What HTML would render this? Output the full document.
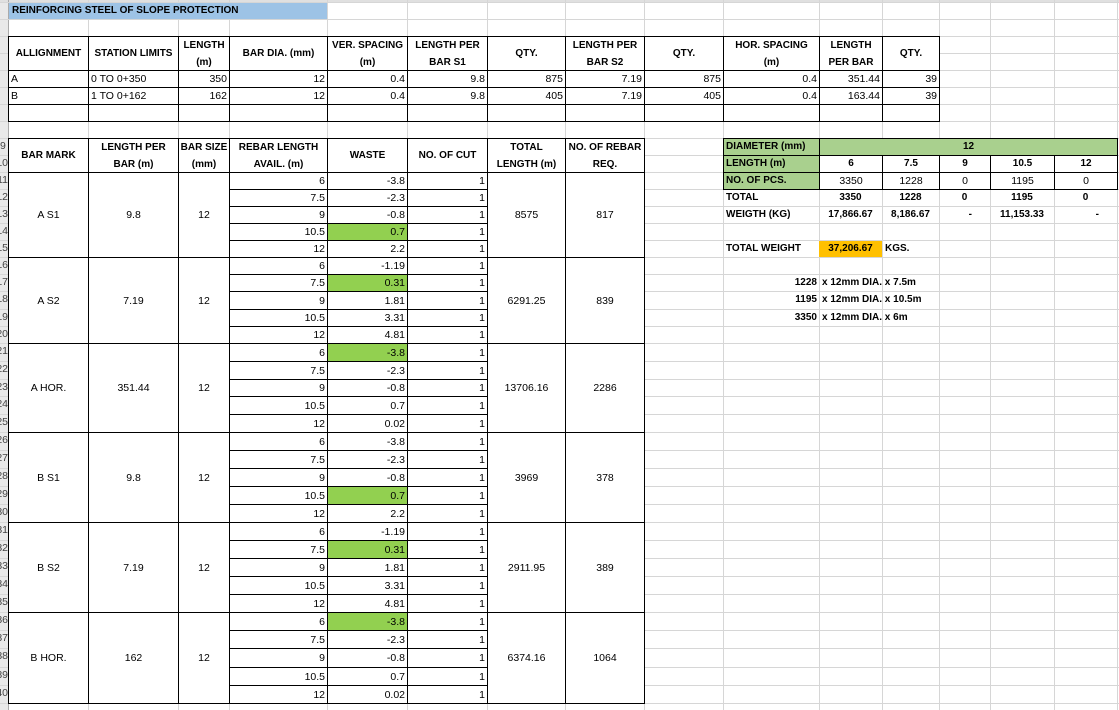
<!DOCTYPE html>
<html><head><meta charset="utf-8"><style>
body{margin:0;width:1119px;height:710px;overflow:hidden;background:#fff;position:relative;font-family:"Liberation Sans",Arial,sans-serif;font-size:10.5px;color:#000}
.c{position:absolute;box-sizing:border-box;display:flex;align-items:center;white-space:nowrap;overflow:hidden;line-height:12px;background:#fff}
.t{background:transparent}
.b{border:1px solid #000}
.r{justify-content:flex-end;padding-right:2px}
.m{justify-content:center;text-align:center}
.l{padding-left:2px}
.h{font-weight:bold;font-size:10px}
.g{background:#92d050}
.lg{background:#a9d08e}
.o{background:#ffc000}
.rh{position:absolute;left:0;width:8px;overflow:hidden;direction:rtl;text-align:left;font-size:10.5px;color:#444;line-height:17px}
</style></head><body>
<svg width="1119" height="710" style="position:absolute;left:0;top:0" stroke="#d6d6d6" stroke-width="1">
<rect x="0" y="0" width="8" height="710" fill="#e9e9e9" stroke="none"/>
<rect x="0" y="0" width="1119" height="2" fill="#e0e0e0" stroke="none"/>
<line x1="8.5" y1="0" x2="8.5" y2="710" stroke="#aaa"/>
<g>
<line x1="88.5" y1="0" x2="88.5" y2="710"/><line x1="178.5" y1="0" x2="178.5" y2="710"/><line x1="229.5" y1="0" x2="229.5" y2="710"/><line x1="327.5" y1="0" x2="327.5" y2="710"/><line x1="407.5" y1="0" x2="407.5" y2="710"/><line x1="487.5" y1="0" x2="487.5" y2="710"/><line x1="565.5" y1="0" x2="565.5" y2="710"/><line x1="644.5" y1="0" x2="644.5" y2="710"/><line x1="723.5" y1="0" x2="723.5" y2="710"/><line x1="819.5" y1="0" x2="819.5" y2="710"/><line x1="882.5" y1="0" x2="882.5" y2="710"/><line x1="939.5" y1="0" x2="939.5" y2="710"/><line x1="990.5" y1="0" x2="990.5" y2="710"/><line x1="1054.5" y1="0" x2="1054.5" y2="710"/><line x1="1117.5" y1="0" x2="1117.5" y2="710"/>
</g>
<g>
<line x1="0" y1="2.5" x2="1119" y2="2.5"/><line x1="0" y1="19.5" x2="1119" y2="19.5"/><line x1="0" y1="36.5" x2="1119" y2="36.5"/><line x1="0" y1="53.5" x2="1119" y2="53.5"/><line x1="0" y1="70.5" x2="1119" y2="70.5"/><line x1="0" y1="87.5" x2="1119" y2="87.5"/><line x1="0" y1="104.5" x2="1119" y2="104.5"/><line x1="0" y1="121.5" x2="1119" y2="121.5"/><line x1="0" y1="138.5" x2="1119" y2="138.5"/><line x1="0" y1="155.5" x2="1119" y2="155.5"/><line x1="0" y1="172.5" x2="1119" y2="172.5"/><line x1="0" y1="189.5" x2="1119" y2="189.5"/><line x1="0" y1="206.5" x2="1119" y2="206.5"/><line x1="0" y1="223.5" x2="1119" y2="223.5"/><line x1="0" y1="240.5" x2="1119" y2="240.5"/><line x1="0" y1="257.5" x2="1119" y2="257.5"/><line x1="0" y1="274.5" x2="1119" y2="274.5"/><line x1="0" y1="291.5" x2="1119" y2="291.5"/><line x1="0" y1="309.5" x2="1119" y2="309.5"/><line x1="0" y1="326.5" x2="1119" y2="326.5"/><line x1="0" y1="343.5" x2="1119" y2="343.5"/><line x1="0" y1="361.5" x2="1119" y2="361.5"/><line x1="0" y1="379.5" x2="1119" y2="379.5"/><line x1="0" y1="396.5" x2="1119" y2="396.5"/><line x1="0" y1="414.5" x2="1119" y2="414.5"/><line x1="0" y1="432.5" x2="1119" y2="432.5"/><line x1="0" y1="450.5" x2="1119" y2="450.5"/><line x1="0" y1="468.5" x2="1119" y2="468.5"/><line x1="0" y1="486.5" x2="1119" y2="486.5"/><line x1="0" y1="504.5" x2="1119" y2="504.5"/><line x1="0" y1="522.5" x2="1119" y2="522.5"/><line x1="0" y1="540.5" x2="1119" y2="540.5"/><line x1="0" y1="558.5" x2="1119" y2="558.5"/><line x1="0" y1="576.5" x2="1119" y2="576.5"/><line x1="0" y1="594.5" x2="1119" y2="594.5"/><line x1="0" y1="612.5" x2="1119" y2="612.5"/><line x1="0" y1="630.5" x2="1119" y2="630.5"/><line x1="0" y1="648.5" x2="1119" y2="648.5"/><line x1="0" y1="667.5" x2="1119" y2="667.5"/><line x1="0" y1="685.5" x2="1119" y2="685.5"/><line x1="0" y1="703.5" x2="1119" y2="703.5"/>
</g>
</svg>

<!-- row numbers (clipped) -->
<div class="rh" style="top:138px">9</div><div class="rh" style="top:155px">10</div><div class="rh" style="top:172px">11</div><div class="rh" style="top:189px">12</div><div class="rh" style="top:206px">13</div><div class="rh" style="top:223px">14</div><div class="rh" style="top:240px">15</div><div class="rh" style="top:257px">16</div><div class="rh" style="top:274px">17</div><div class="rh" style="top:291px">18</div><div class="rh" style="top:309px">19</div><div class="rh" style="top:326px">20</div><div class="rh" style="top:343px">21</div><div class="rh" style="top:361px">22</div><div class="rh" style="top:379px">23</div><div class="rh" style="top:396px">24</div><div class="rh" style="top:414px">25</div><div class="rh" style="top:432px">26</div><div class="rh" style="top:450px">27</div><div class="rh" style="top:468px">28</div><div class="rh" style="top:486px">29</div><div class="rh" style="top:504px">30</div><div class="rh" style="top:522px">31</div><div class="rh" style="top:540px">32</div><div class="rh" style="top:558px">33</div><div class="rh" style="top:576px">34</div><div class="rh" style="top:594px">35</div><div class="rh" style="top:612px">36</div><div class="rh" style="top:630px">37</div><div class="rh" style="top:648px">38</div><div class="rh" style="top:667px">39</div><div class="rh" style="top:685px">40</div>

<!-- title -->
<div class="c h l" style="left:9px;top:3px;width:318px;height:16px;background:#9dc3e6;padding-left:3px">REINFORCING STEEL OF SLOPE PROTECTION</div>

<!-- top table header -->
<div class="c b h m" style="left:8px;top:36px;width:81px;height:35px">ALLIGNMENT</div>
<div class="c b h m" style="left:88px;top:36px;width:91px;height:35px">STATION LIMITS</div>
<div class="c b h m" style="left:178px;top:36px;width:52px;height:35px;line-height:17px">LENGTH<br>(m)</div>
<div class="c b h m" style="left:229px;top:36px;width:99px;height:35px">BAR DIA. (mm)</div>
<div class="c b h m" style="left:327px;top:36px;width:81px;height:35px;line-height:17px">VER. SPACING<br>(m)</div>
<div class="c b h m" style="left:407px;top:36px;width:81px;height:35px;line-height:17px">LENGTH PER<br>BAR S1</div>
<div class="c b h m" style="left:487px;top:36px;width:79px;height:35px">QTY.</div>
<div class="c b h m" style="left:565px;top:36px;width:80px;height:35px;line-height:17px">LENGTH PER<br>BAR S2</div>
<div class="c b h m" style="left:644px;top:36px;width:80px;height:35px">QTY.</div>
<div class="c b h m" style="left:723px;top:36px;width:97px;height:35px;line-height:17px">HOR. SPACING<br>(m)</div>
<div class="c b h m" style="left:819px;top:36px;width:64px;height:35px;line-height:17px">LENGTH<br>PER BAR</div>
<div class="c b h m" style="left:882px;top:36px;width:58px;height:35px">QTY.</div>

<!-- row A -->
<div class="c b l" style="left:8px;top:70px;width:81px;height:18px">A</div>
<div class="c b l" style="left:88px;top:70px;width:91px;height:18px">0 TO 0+350</div>
<div class="c b r" style="left:178px;top:70px;width:52px;height:18px">350</div>
<div class="c b r" style="left:229px;top:70px;width:99px;height:18px">12</div>
<div class="c b r" style="left:327px;top:70px;width:81px;height:18px">0.4</div>
<div class="c b r" style="left:407px;top:70px;width:81px;height:18px">9.8</div>
<div class="c b r" style="left:487px;top:70px;width:79px;height:18px">875</div>
<div class="c b r" style="left:565px;top:70px;width:80px;height:18px">7.19</div>
<div class="c b r" style="left:644px;top:70px;width:80px;height:18px">875</div>
<div class="c b r" style="left:723px;top:70px;width:97px;height:18px">0.4</div>
<div class="c b r" style="left:819px;top:70px;width:64px;height:18px">351.44</div>
<div class="c b r" style="left:882px;top:70px;width:58px;height:18px">39</div>
<!-- row B -->
<div class="c b l" style="left:8px;top:87px;width:81px;height:18px">B</div>
<div class="c b l" style="left:88px;top:87px;width:91px;height:18px">1 TO 0+162</div>
<div class="c b r" style="left:178px;top:87px;width:52px;height:18px">162</div>
<div class="c b r" style="left:229px;top:87px;width:99px;height:18px">12</div>
<div class="c b r" style="left:327px;top:87px;width:81px;height:18px">0.4</div>
<div class="c b r" style="left:407px;top:87px;width:81px;height:18px">9.8</div>
<div class="c b r" style="left:487px;top:87px;width:79px;height:18px">405</div>
<div class="c b r" style="left:565px;top:87px;width:80px;height:18px">7.19</div>
<div class="c b r" style="left:644px;top:87px;width:80px;height:18px">405</div>
<div class="c b r" style="left:723px;top:87px;width:97px;height:18px">0.4</div>
<div class="c b r" style="left:819px;top:87px;width:64px;height:18px">163.44</div>
<div class="c b r" style="left:882px;top:87px;width:58px;height:18px">39</div>
<!-- blank row -->
<div class="c b" style="left:8px;top:104px;width:81px;height:18px"></div>
<div class="c b" style="left:88px;top:104px;width:91px;height:18px"></div>
<div class="c b" style="left:178px;top:104px;width:52px;height:18px"></div>
<div class="c b" style="left:229px;top:104px;width:99px;height:18px"></div>
<div class="c b" style="left:327px;top:104px;width:81px;height:18px"></div>
<div class="c b" style="left:407px;top:104px;width:81px;height:18px"></div>
<div class="c b" style="left:487px;top:104px;width:79px;height:18px"></div>
<div class="c b" style="left:565px;top:104px;width:80px;height:18px"></div>
<div class="c b" style="left:644px;top:104px;width:80px;height:18px"></div>
<div class="c b" style="left:723px;top:104px;width:97px;height:18px"></div>
<div class="c b" style="left:819px;top:104px;width:64px;height:18px"></div>
<div class="c b" style="left:882px;top:104px;width:58px;height:18px"></div>

<!-- lower table header -->
<div class="c b h m" style="left:8px;top:138px;width:81px;height:35px">BAR MARK</div>
<div class="c b h m" style="left:88px;top:138px;width:91px;height:35px;line-height:17px">LENGTH PER<br>BAR (m)</div>
<div class="c b h m" style="left:178px;top:138px;width:52px;height:35px;line-height:17px">BAR SIZE<br>(mm)</div>
<div class="c b h m" style="left:229px;top:138px;width:99px;height:35px;line-height:17px">REBAR LENGTH<br>AVAIL. (m)</div>
<div class="c b h m" style="left:327px;top:138px;width:81px;height:35px">WASTE</div>
<div class="c b h m" style="left:407px;top:138px;width:81px;height:35px">NO. OF CUT</div>
<div class="c b h m" style="left:487px;top:138px;width:79px;height:35px;line-height:17px">TOTAL<br>LENGTH (m)</div>
<div class="c b h m" style="left:565px;top:138px;width:80px;height:35px;line-height:17px">NO. OF REBAR<br>REQ.</div>

<!-- group A S1 -->
<div class="c b m" style="left:8px;top:172px;width:81px;height:86px">A S1</div>
<div class="c b m" style="left:88px;top:172px;width:91px;height:86px">9.8</div>
<div class="c b m" style="left:178px;top:172px;width:52px;height:86px">12</div>
<div class="c b m" style="left:487px;top:172px;width:79px;height:86px">8575</div>
<div class="c b m" style="left:565px;top:172px;width:80px;height:86px">817</div>
<div class="c b r" style="left:229px;top:172px;width:99px;height:18px">6</div><div class="c b r" style="left:327px;top:172px;width:81px;height:18px">-3.8</div><div class="c b r" style="left:407px;top:172px;width:81px;height:18px">1</div>
<div class="c b r" style="left:229px;top:189px;width:99px;height:18px">7.5</div><div class="c b r" style="left:327px;top:189px;width:81px;height:18px">-2.3</div><div class="c b r" style="left:407px;top:189px;width:81px;height:18px">1</div>
<div class="c b r" style="left:229px;top:206px;width:99px;height:18px">9</div><div class="c b r" style="left:327px;top:206px;width:81px;height:18px">-0.8</div><div class="c b r" style="left:407px;top:206px;width:81px;height:18px">1</div>
<div class="c b r" style="left:229px;top:223px;width:99px;height:18px">10.5</div><div class="c b r g" style="left:327px;top:223px;width:81px;height:18px">0.7</div><div class="c b r" style="left:407px;top:223px;width:81px;height:18px">1</div>
<div class="c b r" style="left:229px;top:240px;width:99px;height:18px">12</div><div class="c b r" style="left:327px;top:240px;width:81px;height:18px">2.2</div><div class="c b r" style="left:407px;top:240px;width:81px;height:18px">1</div>

<!-- group A S2 -->
<div class="c b m" style="left:8px;top:257px;width:81px;height:87px">A S2</div>
<div class="c b m" style="left:88px;top:257px;width:91px;height:87px">7.19</div>
<div class="c b m" style="left:178px;top:257px;width:52px;height:87px">12</div>
<div class="c b m" style="left:487px;top:257px;width:79px;height:87px">6291.25</div>
<div class="c b m" style="left:565px;top:257px;width:80px;height:87px">839</div>
<div class="c b r" style="left:229px;top:257px;width:99px;height:18px">6</div><div class="c b r" style="left:327px;top:257px;width:81px;height:18px">-1.19</div><div class="c b r" style="left:407px;top:257px;width:81px;height:18px">1</div>
<div class="c b r" style="left:229px;top:274px;width:99px;height:18px">7.5</div><div class="c b r g" style="left:327px;top:274px;width:81px;height:18px">0.31</div><div class="c b r" style="left:407px;top:274px;width:81px;height:18px">1</div>
<div class="c b r" style="left:229px;top:291px;width:99px;height:19px">9</div><div class="c b r" style="left:327px;top:291px;width:81px;height:19px">1.81</div><div class="c b r" style="left:407px;top:291px;width:81px;height:19px">1</div>
<div class="c b r" style="left:229px;top:309px;width:99px;height:18px">10.5</div><div class="c b r" style="left:327px;top:309px;width:81px;height:18px">3.31</div><div class="c b r" style="left:407px;top:309px;width:81px;height:18px">1</div>
<div class="c b r" style="left:229px;top:326px;width:99px;height:18px">12</div><div class="c b r" style="left:327px;top:326px;width:81px;height:18px">4.81</div><div class="c b r" style="left:407px;top:326px;width:81px;height:18px">1</div>

<!-- group A HOR -->
<div class="c b m" style="left:8px;top:343px;width:81px;height:90px">A HOR.</div>
<div class="c b m" style="left:88px;top:343px;width:91px;height:90px">351.44</div>
<div class="c b m" style="left:178px;top:343px;width:52px;height:90px">12</div>
<div class="c b m" style="left:487px;top:343px;width:79px;height:90px">13706.16</div>
<div class="c b m" style="left:565px;top:343px;width:80px;height:90px">2286</div>
<div class="c b r" style="left:229px;top:343px;width:99px;height:19px">6</div><div class="c b r g" style="left:327px;top:343px;width:81px;height:19px">-3.8</div><div class="c b r" style="left:407px;top:343px;width:81px;height:19px">1</div>
<div class="c b r" style="left:229px;top:361px;width:99px;height:19px">7.5</div><div class="c b r" style="left:327px;top:361px;width:81px;height:19px">-2.3</div><div class="c b r" style="left:407px;top:361px;width:81px;height:19px">1</div>
<div class="c b r" style="left:229px;top:379px;width:99px;height:18px">9</div><div class="c b r" style="left:327px;top:379px;width:81px;height:18px">-0.8</div><div class="c b r" style="left:407px;top:379px;width:81px;height:18px">1</div>
<div class="c b r" style="left:229px;top:396px;width:99px;height:19px">10.5</div><div class="c b r" style="left:327px;top:396px;width:81px;height:19px">0.7</div><div class="c b r" style="left:407px;top:396px;width:81px;height:19px">1</div>
<div class="c b r" style="left:229px;top:414px;width:99px;height:19px">12</div><div class="c b r" style="left:327px;top:414px;width:81px;height:19px">0.02</div><div class="c b r" style="left:407px;top:414px;width:81px;height:19px">1</div>

<!-- group B S1 -->
<div class="c b m" style="left:8px;top:432px;width:81px;height:91px">B S1</div>
<div class="c b m" style="left:88px;top:432px;width:91px;height:91px">9.8</div>
<div class="c b m" style="left:178px;top:432px;width:52px;height:91px">12</div>
<div class="c b m" style="left:487px;top:432px;width:79px;height:91px">3969</div>
<div class="c b m" style="left:565px;top:432px;width:80px;height:91px">378</div>
<div class="c b r" style="left:229px;top:432px;width:99px;height:19px">6</div><div class="c b r" style="left:327px;top:432px;width:81px;height:19px">-3.8</div><div class="c b r" style="left:407px;top:432px;width:81px;height:19px">1</div>
<div class="c b r" style="left:229px;top:450px;width:99px;height:19px">7.5</div><div class="c b r" style="left:327px;top:450px;width:81px;height:19px">-2.3</div><div class="c b r" style="left:407px;top:450px;width:81px;height:19px">1</div>
<div class="c b r" style="left:229px;top:468px;width:99px;height:19px">9</div><div class="c b r" style="left:327px;top:468px;width:81px;height:19px">-0.8</div><div class="c b r" style="left:407px;top:468px;width:81px;height:19px">1</div>
<div class="c b r" style="left:229px;top:486px;width:99px;height:19px">10.5</div><div class="c b r g" style="left:327px;top:486px;width:81px;height:19px">0.7</div><div class="c b r" style="left:407px;top:486px;width:81px;height:19px">1</div>
<div class="c b r" style="left:229px;top:504px;width:99px;height:19px">12</div><div class="c b r" style="left:327px;top:504px;width:81px;height:19px">2.2</div><div class="c b r" style="left:407px;top:504px;width:81px;height:19px">1</div>

<!-- group B S2 -->
<div class="c b m" style="left:8px;top:522px;width:81px;height:91px">B S2</div>
<div class="c b m" style="left:88px;top:522px;width:91px;height:91px">7.19</div>
<div class="c b m" style="left:178px;top:522px;width:52px;height:91px">12</div>
<div class="c b m" style="left:487px;top:522px;width:79px;height:91px">2911.95</div>
<div class="c b m" style="left:565px;top:522px;width:80px;height:91px">389</div>
<div class="c b r" style="left:229px;top:522px;width:99px;height:19px">6</div><div class="c b r" style="left:327px;top:522px;width:81px;height:19px">-1.19</div><div class="c b r" style="left:407px;top:522px;width:81px;height:19px">1</div>
<div class="c b r" style="left:229px;top:540px;width:99px;height:19px">7.5</div><div class="c b r g" style="left:327px;top:540px;width:81px;height:19px">0.31</div><div class="c b r" style="left:407px;top:540px;width:81px;height:19px">1</div>
<div class="c b r" style="left:229px;top:558px;width:99px;height:19px">9</div><div class="c b r" style="left:327px;top:558px;width:81px;height:19px">1.81</div><div class="c b r" style="left:407px;top:558px;width:81px;height:19px">1</div>
<div class="c b r" style="left:229px;top:576px;width:99px;height:19px">10.5</div><div class="c b r" style="left:327px;top:576px;width:81px;height:19px">3.31</div><div class="c b r" style="left:407px;top:576px;width:81px;height:19px">1</div>
<div class="c b r" style="left:229px;top:594px;width:99px;height:19px">12</div><div class="c b r" style="left:327px;top:594px;width:81px;height:19px">4.81</div><div class="c b r" style="left:407px;top:594px;width:81px;height:19px">1</div>

<!-- group B HOR -->
<div class="c b m" style="left:8px;top:612px;width:81px;height:92px">B HOR.</div>
<div class="c b m" style="left:88px;top:612px;width:91px;height:92px">162</div>
<div class="c b m" style="left:178px;top:612px;width:52px;height:92px">12</div>
<div class="c b m" style="left:487px;top:612px;width:79px;height:92px">6374.16</div>
<div class="c b m" style="left:565px;top:612px;width:80px;height:92px">1064</div>
<div class="c b r" style="left:229px;top:612px;width:99px;height:19px">6</div><div class="c b r g" style="left:327px;top:612px;width:81px;height:19px">-3.8</div><div class="c b r" style="left:407px;top:612px;width:81px;height:19px">1</div>
<div class="c b r" style="left:229px;top:630px;width:99px;height:19px">7.5</div><div class="c b r" style="left:327px;top:630px;width:81px;height:19px">-2.3</div><div class="c b r" style="left:407px;top:630px;width:81px;height:19px">1</div>
<div class="c b r" style="left:229px;top:648px;width:99px;height:20px">9</div><div class="c b r" style="left:327px;top:648px;width:81px;height:20px">-0.8</div><div class="c b r" style="left:407px;top:648px;width:81px;height:20px">1</div>
<div class="c b r" style="left:229px;top:667px;width:99px;height:19px">10.5</div><div class="c b r" style="left:327px;top:667px;width:81px;height:19px">0.7</div><div class="c b r" style="left:407px;top:667px;width:81px;height:19px">1</div>
<div class="c b r" style="left:229px;top:685px;width:99px;height:19px">12</div><div class="c b r" style="left:327px;top:685px;width:81px;height:19px">0.02</div><div class="c b r" style="left:407px;top:685px;width:81px;height:19px">1</div>

<!-- right summary table -->
<div class="c b h l lg" style="left:723px;top:138px;width:97px;height:18px">DIAMETER (mm)</div>
<div class="c b h m lg" style="left:819px;top:138px;width:299px;height:18px">12</div>
<div class="c b h l lg" style="left:723px;top:155px;width:97px;height:18px">LENGTH (m)</div>
<div class="c b h m" style="left:819px;top:155px;width:64px;height:18px">6</div>
<div class="c b h m" style="left:882px;top:155px;width:58px;height:18px">7.5</div>
<div class="c b h m" style="left:939px;top:155px;width:52px;height:18px">9</div>
<div class="c b h m" style="left:990px;top:155px;width:65px;height:18px">10.5</div>
<div class="c b h m" style="left:1054px;top:155px;width:64px;height:18px">12</div>
<div class="c b h l lg" style="left:723px;top:172px;width:97px;height:18px">NO. OF PCS.</div>
<div class="c b m" style="left:819px;top:172px;width:64px;height:18px">3350</div>
<div class="c b m" style="left:882px;top:172px;width:58px;height:18px">1228</div>
<div class="c b m" style="left:939px;top:172px;width:52px;height:18px">0</div>
<div class="c b m" style="left:990px;top:172px;width:65px;height:18px">1195</div>
<div class="c b m" style="left:1054px;top:172px;width:64px;height:18px">0</div>

<div class="c t h l" style="left:724px;top:189px;width:95px;height:17px">TOTAL</div>
<div class="c t h m" style="left:819px;top:189px;width:63px;height:17px">3350</div>
<div class="c t h m" style="left:882px;top:189px;width:57px;height:17px">1228</div>
<div class="c t h m" style="left:939px;top:189px;width:51px;height:17px">0</div>
<div class="c t h m" style="left:990px;top:189px;width:64px;height:17px">1195</div>
<div class="c t h m" style="left:1054px;top:189px;width:63px;height:17px">0</div>

<div class="c t h l" style="left:724px;top:206px;width:95px;height:17px">WEIGTH (KG)</div>
<div class="c t h m" style="left:819px;top:206px;width:63px;height:17px">17,866.67</div>
<div class="c t h m" style="left:882px;top:206px;width:57px;height:17px">8,186.67</div>
<div class="c t h r" style="left:939px;top:206px;width:51px;height:17px;padding-right:18px">-</div>
<div class="c t h m" style="left:990px;top:206px;width:64px;height:17px">11,153.33</div>
<div class="c t h r" style="left:1054px;top:206px;width:63px;height:17px;padding-right:18px">-</div>

<div class="c t h l" style="left:724px;top:240px;width:95px;height:17px">TOTAL WEIGHT</div>
<div class="c h m o" style="left:819px;top:241px;width:63px;height:16px">37,206.67</div>
<div class="c t h l" style="left:883px;top:240px;width:56px;height:17px">KGS.</div>

<div class="c t h r" style="left:724px;top:274px;width:95px;height:17px">1228</div>
<div class="c t h l" style="left:820px;top:274px;width:200px;height:17px;overflow:visible">x 12mm DIA. x 7.5m</div>
<div class="c t h r" style="left:724px;top:291px;width:95px;height:18px">1195</div>
<div class="c t h l" style="left:820px;top:291px;width:200px;height:18px;overflow:visible">x 12mm DIA. x 10.5m</div>
<div class="c t h r" style="left:724px;top:309px;width:95px;height:17px">3350</div>
<div class="c t h l" style="left:820px;top:309px;width:200px;height:17px;overflow:visible">x 12mm DIA. x 6m</div>
</body></html>
